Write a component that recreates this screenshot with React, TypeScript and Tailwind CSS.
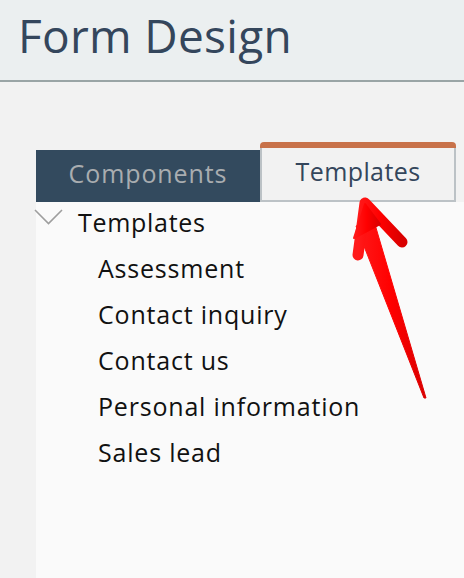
export default function App() {
  const items = ["Assessment", "Contact inquiry", "Contact us", "Personal information", "Sales lead"];
  return (
    <div className="relative w-[464px] h-[578px] overflow-hidden bg-[#f2f2f2] flex flex-col" style={{ fontFamily: "'Open Sans', Lato, sans-serif" }}>
      <header className="h-[82px] shrink-0 bg-[#ebeff0] border-b-2 border-[#9aa5a6] pl-[18px] pt-[12px]">
        <h1 className="text-[46px] leading-[46px] text-[#34465c] tracking-[0.3px]">Form Design</h1>
      </header>

      <div className="flex items-end pl-[36px] mt-[60px] shrink-0">
        <div className="w-[224px] h-[52px] pb-[5px] bg-[#334a5e] text-[#a9adb0] text-[25px] tracking-[0.9px] flex items-center justify-center">
          Components
        </div>
        <div className="w-[196px] h-[60px] border-t-[6px] border-t-[#c8724a] rounded-t-[4px]">
          <div className="h-full pb-[4px] border-2 border-t-0 border-[#bcc2c6] bg-[#f2f2f2] text-[#34465c] text-[25px] tracking-[0.4px] flex items-center justify-center">
            Templates
          </div>
        </div>
      </div>

      <div className="ml-[36px] flex-1 bg-[#fafafa] pt-[4px]">
        <div className="flex items-start -ml-[2px] h-[32px]">
          <svg width="30" height="16" viewBox="0 0 30 16" className="shrink-0 mt-[3px]">
            <polyline points="1,1 14.5,14.5 28,1" fill="none" stroke="#9e9e9e" strokeWidth="1.6" />
          </svg>
          <span className="ml-[14px] text-[25px] leading-[32px] tracking-[0.7px] text-[#111]">Templates</span>
        </div>
        <ul className="pl-[62px] mt-[7px] flex flex-col">
          {items.map((t) => (
            <li key={t} className="h-[46px] text-[25px] leading-[46px] tracking-[0.8px] text-[#111]">
              {t}
            </li>
          ))}
        </ul>
      </div>

      <svg className="absolute left-0 top-0 pointer-events-none" width="464" height="578" viewBox="0 0 464 578">
        <defs>
          <linearGradient id="arrowGrad" x1="0" y1="0" x2="1" y2="0">
            <stop offset="0" stopColor="#ff1a1a" />
            <stop offset="0.5" stopColor="#ff0000" />
            <stop offset="1" stopColor="#d90000" />
          </linearGradient>
        </defs>
        <g fill="url(#arrowGrad)" stroke="url(#arrowGrad)" strokeLinejoin="round">
          <path d="M356 226 L374 221 L426 398 L424 398 Z" strokeWidth="1" />
          <path d="M365 203 L358 255 M365 203 L402 242" fill="none" strokeWidth="11" strokeLinecap="round" />
          <path d="M365 204 L354 238 L380 224 Z" strokeWidth="2" />
        </g>
      </svg>
    </div>
  );
}
